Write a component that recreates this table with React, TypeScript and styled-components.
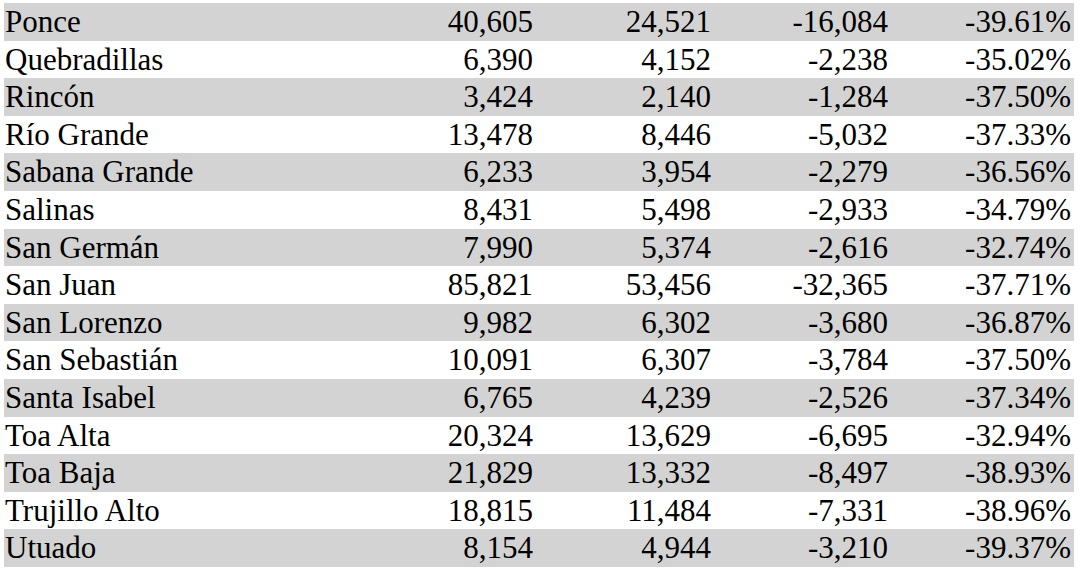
import React, { FC } from 'react';
import styled, { createGlobalStyle } from 'styled-components';

const GlobalStyle = createGlobalStyle`
	body {
		margin: 0;
		background: #ffffff;
	}
`;

const Container = styled.div`
	padding: 3px 6px 0 4px;
`;
const Table = styled.table`
	width: 1070px;
	border-collapse: collapse;
	table-layout: fixed;
	font-family: 'Liberation Serif', 'Times New Roman', serif;
	font-size: 31px;
	color: #000000;
`;
const Col = styled.col<{ $width: number }>`
	width: ${(p) => p.$width}px;
`;
const Row = styled.tr<{ $shaded: boolean }>`
	height: 37.6px;
	background-color: ${(p) => (p.$shaded ? '#d3d3d3' : '#ffffff')};
`;
const NameCell = styled.td`
	padding: 0 0 0 1px;
	line-height: 37.6px;
	text-align: left;
	white-space: nowrap;
`;
const NumberCell = styled.td`
	padding: 0 3px 0 0;
	line-height: 37.6px;
	text-align: right;
	white-space: nowrap;
`;

type Town = {
	name: string;
	before: string;
	after: string;
	change: string;
	percent: string;
};

const columnWidths: number[] = [355, 177, 178, 177, 183];

const towns: Town[] = [
	{ name: 'Ponce', before: '40,605', after: '24,521', change: '-16,084', percent: '-39.61%' },
	{ name: 'Quebradillas', before: '6,390', after: '4,152', change: '-2,238', percent: '-35.02%' },
	{ name: 'Rincón', before: '3,424', after: '2,140', change: '-1,284', percent: '-37.50%' },
	{ name: 'Río Grande', before: '13,478', after: '8,446', change: '-5,032', percent: '-37.33%' },
	{ name: 'Sabana Grande', before: '6,233', after: '3,954', change: '-2,279', percent: '-36.56%' },
	{ name: 'Salinas', before: '8,431', after: '5,498', change: '-2,933', percent: '-34.79%' },
	{ name: 'San Germán', before: '7,990', after: '5,374', change: '-2,616', percent: '-32.74%' },
	{ name: 'San Juan', before: '85,821', after: '53,456', change: '-32,365', percent: '-37.71%' },
	{ name: 'San Lorenzo', before: '9,982', after: '6,302', change: '-3,680', percent: '-36.87%' },
	{ name: 'San Sebastián', before: '10,091', after: '6,307', change: '-3,784', percent: '-37.50%' },
	{ name: 'Santa Isabel', before: '6,765', after: '4,239', change: '-2,526', percent: '-37.34%' },
	{ name: 'Toa Alta', before: '20,324', after: '13,629', change: '-6,695', percent: '-32.94%' },
	{ name: 'Toa Baja', before: '21,829', after: '13,332', change: '-8,497', percent: '-38.93%' },
	{ name: 'Trujillo Alto', before: '18,815', after: '11,484', change: '-7,331', percent: '-38.96%' },
	{ name: 'Utuado', before: '8,154', after: '4,944', change: '-3,210', percent: '-39.37%' },
];

const App: FC = () => {
	return (
		<Container>
			<GlobalStyle />
			<Table>
				<colgroup>
					{columnWidths.map((w, i) => (
						<Col key={i} $width={w} />
					))}
				</colgroup>
				<tbody>
					{towns.map((t, i) => (
						<Row key={t.name} $shaded={i % 2 === 0}>
							<NameCell>{t.name}</NameCell>
							<NumberCell>{t.before}</NumberCell>
							<NumberCell>{t.after}</NumberCell>
							<NumberCell>{t.change}</NumberCell>
							<NumberCell>{t.percent}</NumberCell>
						</Row>
					))}
				</tbody>
			</Table>
		</Container>
	);
};

export default App;
